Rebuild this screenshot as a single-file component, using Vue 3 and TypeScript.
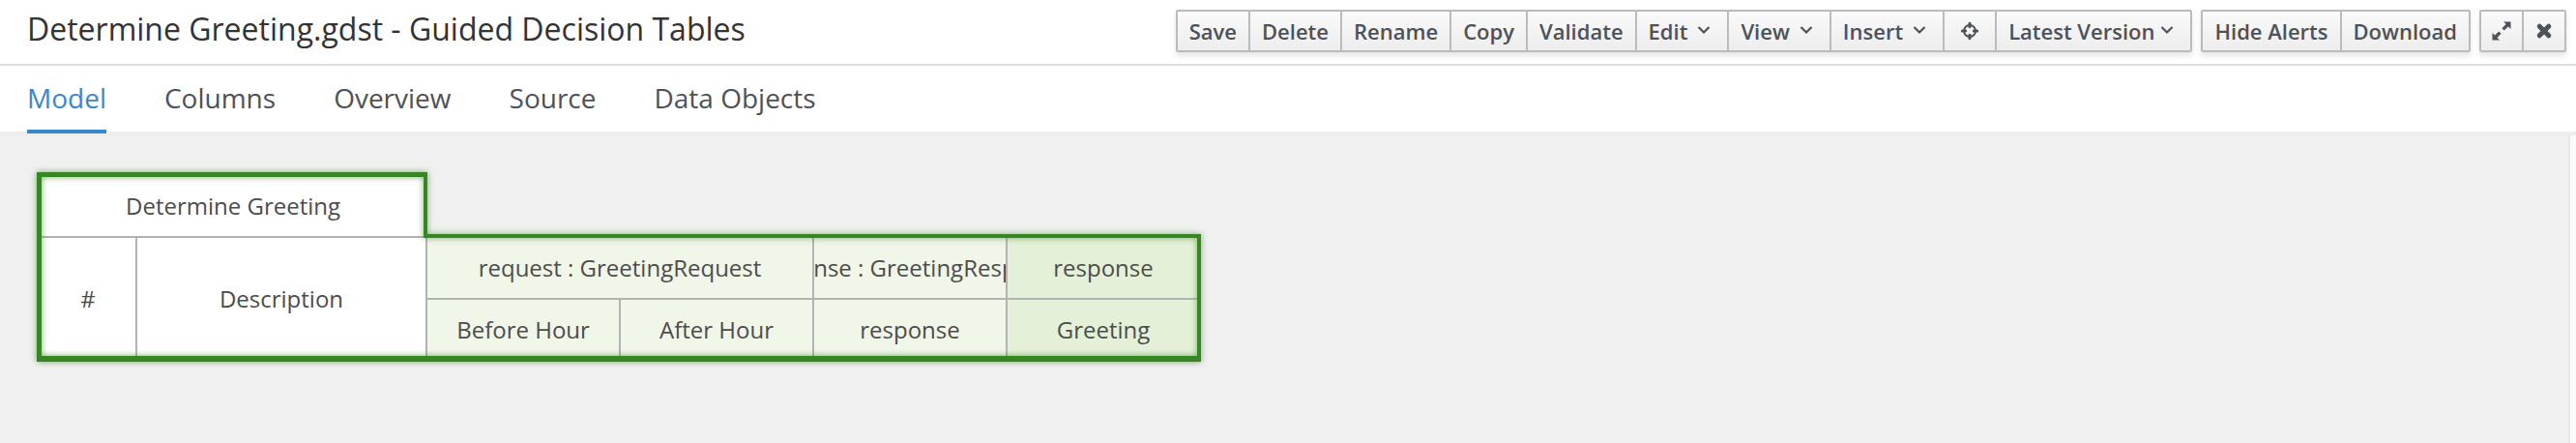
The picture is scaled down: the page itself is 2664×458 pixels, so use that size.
<script setup lang="ts">
import { ref } from 'vue'

interface Action {
  label: string
  kind?: 'menu' | 'target' | 'expand' | 'close'
  tight?: boolean
}

const groups: Action[][] = [
  [
    { label: 'Save' },
    { label: 'Delete' },
    { label: 'Rename' },
    { label: 'Copy' },
    { label: 'Validate' },
    { label: 'Edit', kind: 'menu' },
    { label: 'View', kind: 'menu' },
    { label: 'Insert', kind: 'menu' },
    { label: 'Locate', kind: 'target' },
    { label: 'Latest Version', kind: 'menu', tight: true },
  ],
  [{ label: 'Hide Alerts' }, { label: 'Download' }],
  [
    { label: 'Expand', kind: 'expand' },
    { label: 'Close', kind: 'close' },
  ],
]

const tabs = ['Model', 'Columns', 'Overview', 'Source', 'Data Objects']
const active = ref('Model')
</script>

<template>
  <div class="editor">
    <header class="bar">
      <h1>Determine Greeting.gdst - Guided Decision Tables</h1>
      <div class="toolbar">
        <div v-for="(group, g) in groups" :key="g" class="group">
          <button
            v-for="a in group"
            :key="a.label"
            type="button"
            :class="[a.kind, { tight: a.tight }]"
            :aria-label="a.label"
          >
            <span v-if="!a.kind || a.kind === 'menu'">{{ a.label }}</span>
            <svg v-if="a.kind === 'menu'" class="caret" viewBox="0 0 14 20" aria-hidden="true">
              <path d="M1.500 6 7 11.500 12.500 6" fill="none" stroke="currentColor" stroke-width="2.200" />
            </svg>
            <svg v-else-if="a.kind === 'target'" class="icon" viewBox="0 0 20 20" aria-hidden="true">
              <circle cx="10" cy="10" r="6" fill="none" stroke="currentColor" stroke-width="1.900" />
              <path d="M10 2.400v3.200M10 14.400v3.200M2.400 10h3.200M14.400 10h3.200" stroke="currentColor" stroke-width="3.200" stroke-linecap="round" />
            </svg>
            <svg v-else-if="a.kind === 'expand'" class="icon" viewBox="0 0 20 20" aria-hidden="true">
              <path d="M12 .5h7.500V8l-2.600-2.600-4.200 4.200-2.300-2.300 4.200-4.200zM8 19.500H.5V12l2.600 2.600 4.200-4.200 2.300 2.300-4.200 4.200z" fill="currentColor" />
            </svg>
            <svg v-else-if="a.kind === 'close'" class="icon" viewBox="0 0 20 20" aria-hidden="true">
              <path d="M5.200 5.200l9.600 9.600M14.800 5.200l-9.600 9.600" stroke="currentColor" stroke-width="5" stroke-linecap="round" />
            </svg>
          </button>
        </div>
      </div>
    </header>

    <nav class="tabs">
      <a
        v-for="t in tabs"
        :key="t"
        href="#"
        :class="{ active: t === active }"
        @click.prevent="active = t"
      >{{ t }}</a>
    </nav>

    <main class="scroller">
      <div class="canvas">
        <div class="grid">
          <table>
            <colgroup>
              <col class="narrow" />
              <col class="wide" />
              <col span="4" />
            </colgroup>
            <tbody>
              <tr>
                <th colspan="2">Determine Greeting</th>
                <td colspan="4"></td>
              </tr>
              <tr>
                <th rowspan="2">#</th>
                <th rowspan="2">Description</th>
                <th colspan="2" class="condition">request : GreetingRequest</th>
                <th class="condition"><div class="clip">response : GreetingResponse</div></th>
                <th class="action">response</th>
              </tr>
              <tr>
                <th class="condition">Before Hour</th>
                <th class="condition">After Hour</th>
                <th class="condition">response</th>
                <th class="action">Greeting</th>
              </tr>
            </tbody>
          </table>
          <svg class="outline" viewBox="0 0 1204 196" aria-hidden="true">
            <path
              d="M0 0H404V64H1204V196H0ZM5 5V190H1200V68H400V5Z"
              fill="#378523"
              fill-rule="evenodd"
            />
          </svg>
        </div>
      </div>
    </main>
  </div>
</template>

<style scoped>
.editor {
  display: flex;
  flex-direction: column;
  min-height: 100vh;
  background: #fff;
  color: #4d5258;
  font-family: "Open Sans", "Noto Sans", sans-serif;
}

.bar {
  display: flex;
  align-items: flex-start;
  justify-content: space-between;
  height: 66px;
  padding: 0 10px 0 28px;
  border-bottom: 2px solid #ddd;
}

h1 {
  margin: 0;
  color: #333;
  font-size: 32px;
  font-weight: 400;
  line-height: 60px;
  white-space: nowrap;
}

.toolbar {
  display: flex;
  gap: 9px;
  padding-top: 10px;
}

.group {
  display: flex;
  box-shadow: 0 4px 6px rgba(3, 3, 3, 0.1);
}

button {
  display: flex;
  align-items: center;
  justify-content: center;
  box-sizing: border-box;
  height: 44px;
  margin: 0;
  padding: 0 12px;
  border: 2px solid #bbb;
  border-radius: 2px;
  background: linear-gradient(#fafafa, #ededed);
  color: #4d5258;
  font-family: inherit;
  font-size: 22px;
  font-weight: 600;
  line-height: 40px;
  white-space: nowrap;
}

button + button {
  margin-left: -2px;
}

.menu {
  gap: 10px;
  padding-right: 17px;
}

.tight {
  gap: 6px;
}

.caret {
  width: 14px;
  height: 20px;
}

.icon {
  flex: none;
  width: 20px;
  height: 20px;
}

.target {
  width: 56px;
}

.expand,
.close {
  width: 46px;
}

.tabs {
  display: flex;
  gap: 60px;
  height: 68px;
  padding: 0 28px;
}

.tabs a {
  z-index: 1;
  height: 66px;
  border-bottom: 4px solid transparent;
  color: #4d5258;
  font-size: 28px;
  line-height: 66px;
  text-decoration: none;
}

.tabs a.active {
  border-color: #3a87cb;
  color: #3a87cb;
}

.scroller {
  display: flex;
  flex: 1;
  padding-right: 6px;
  border-top: 4px solid #ededed;
  background: #fafafa;
}

.canvas {
  flex: 1;
  padding: 38px;
  border-right: 2px solid #e6e6e6;
  background: #f0f0f0;
}

.grid {
  position: relative;
  width: 1200px;
  padding: 4px 0 0 4px;
}

table {
  width: 1200px;
  border-collapse: separate;
  border-spacing: 0;
  table-layout: fixed;
}

.narrow {
  width: 100px;
}

.wide {
  width: 300px;
}

th {
  box-sizing: border-box;
  height: 64px;
  padding: 0;
  border-right: 2px solid #b3b3b3;
  border-bottom: 2px solid #b3b3b3;
  background: #fff;
  color: #4d4d4d;
  font-size: 24px;
  font-weight: 400;
  line-height: 34px;
  text-align: center;
  white-space: nowrap;
}

td {
  padding: 0;
}

.condition {
  background: #f0f6e8;
}

.action {
  background: #e4f1d8;
}

.clip {
  display: flex;
  justify-content: center;
  overflow: hidden;
}

.outline {
  position: absolute;
  top: 0;
  left: 0;
  width: 1204px;
  height: 196px;
  overflow: visible;
  filter: drop-shadow(0 0 3px rgba(55, 133, 35, 0.7));
}
</style>

<style>
body {
  margin: 0;
}
</style>
